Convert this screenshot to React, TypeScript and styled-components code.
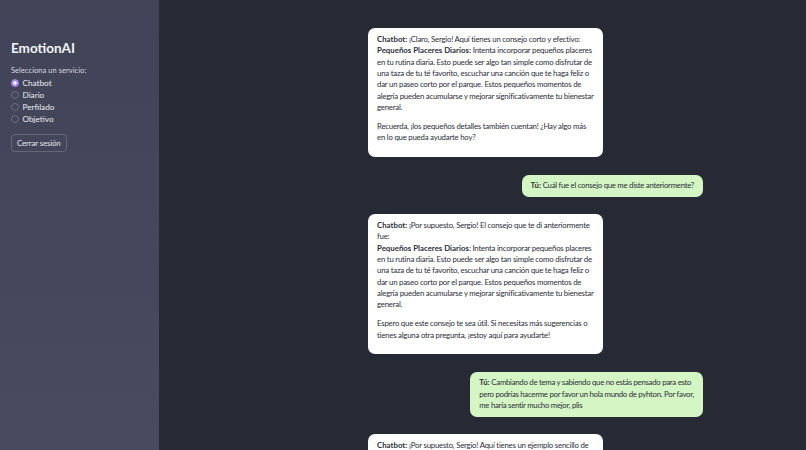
import * as React from 'react'
import styled, { createGlobalStyle } from 'styled-components'

const GlobalStyle = createGlobalStyle`
  html, body, #root {
    margin: 0;
    padding: 0;
    height: 100%;
  }
  body {
    font-family: Lato, "Noto Sans", sans-serif;
    background: #272935;
    overflow: hidden;
  }
`

const Layout = styled.div`
  display: flex;
  height: 450px;
`

const Sidebar = styled.aside`
  width: 159px;
  flex: 0 0 159px;
  background: linear-gradient(180deg, #414457 0%, #484b5f 100%);
  padding: 38px 11px 0;
  box-sizing: border-box;
  color: #f2f2f5;
`

const Title = styled.h1`
  margin: 0 0 8px;
  font-size: 13.5px;
  font-weight: 700;
  line-height: 20px;
  color: #f4f4f6;
`

const Label = styled.div`
  font-size: 7.4px;
  letter-spacing: 0.1px;
  color: #dcdce2;
  margin-bottom: 3px;
`

const RadioList = styled.div`
  display: flex;
  flex-direction: column;
  gap: 2px;
  margin-bottom: 6px;
`

const RadioRow = styled.label`
  display: flex;
  align-items: center;
  gap: 3.5px;
  height: 10px;
  font-size: 8.2px;
  color: #ececf0;
`

const RadioDot = styled.span<{ $checked?: boolean }>`
  width: 8px;
  height: 8px;
  border-radius: 50%;
  box-sizing: border-box;
  border: 1px solid ${p => (p.$checked ? '#a98bf0' : '#6a6d80')};
  background: ${p => (p.$checked ? 'radial-gradient(circle, #ffffff 0 1.4px, #a98bf0 1.9px)' : 'transparent')};
`

const Button = styled.button`
  font-family: inherit;
  font-size: 7.8px;
  letter-spacing: -0.1px;
  color: #e6e6ea;
  background: transparent;
  border: 1px solid rgba(255, 255, 255, 0.18);
  border-radius: 4px;
  padding: 0 5px;
  height: 18px;
`

const Main = styled.main`
  flex: 1;
  overflow: hidden;
  padding: 28px 103px 0 209px;
  display: flex;
  flex-direction: column;
  gap: 17.5px;
`

const Bubble = styled.div<{ $user?: boolean }>`
  align-self: ${p => (p.$user ? 'flex-end' : 'flex-start')};
  width: ${p => (p.$user ? 'auto' : '235px')};
  box-sizing: border-box;
  background: ${p => (p.$user ? '#d4f6c4' : '#ffffff')};
  color: #2c2e39;
  border-radius: 7px;
  padding: ${p => (p.$user ? '5.3px 9px' : '6px 9px 6px')};
  font-size: 7.8px;
  letter-spacing: ${p => (p.$user ? '-0.28px' : '-0.22px')};
  line-height: 11.35px;
  white-space: nowrap;
  flex-shrink: 0;

  p {
    margin: 0 0 ${p => (p.$user ? '0' : '7.5px')};
  }

  b {
    font-weight: 700;
    letter-spacing: 0.02px;
  }
`

type Para = React.ReactNode[]

const services = ['Chatbot', 'Diario', 'Perfilado', 'Objetivo']

const tipLines = (boldColon: boolean): React.ReactNode[] => [
  boldColon ? (
    <><b>Pequeños Placeres Diarios:</b> Intenta incorporar pequeños placeres</>
  ) : (
    <><b>Pequeños Placeres Diarios</b>: Intenta incorporar pequeños placeres</>
  ),
  'en tu rutina diaria. Esto puede ser algo tan simple como disfrutar de',
  'una taza de tu té favorito, escuchar una canción que te haga feliz o',
  'dar un paseo corto por el parque. Estos pequeños momentos de',
  'alegría pueden acumularse y mejorar significativamente tu bienestar',
  'general.',
]

const messages: { user?: boolean; paras: Para[] }[] = [
  {
    paras: [
      [<><b>Chatbot:</b> ¡Claro, Sergio! Aquí tienes un consejo corto y efectivo:</>, ...tipLines(true)],
      ['Recuerda, ¡los pequeños detalles también cuentan! ¿Hay algo más', 'en lo que pueda ayudarte hoy?'],
    ],
  },
  {
    user: true,
    paras: [[<><b>Tú:</b> Cuál fue el consejo que me diste anteriormente?</>]],
  },
  {
    paras: [
      [<><b>Chatbot:</b> ¡Por supuesto, Sergio! El consejo que te di anteriormente</>, 'fue:', ...tipLines(false)],
      [
        'Espero que este consejo te sea útil. Si necesitas más sugerencias o',
        'tienes alguna otra pregunta, ¡estoy aquí para ayudarte!',
      ],
    ],
  },
  {
    user: true,
    paras: [
      [
        <><b>Tú:</b> Cambiando de tema y sabiendo que no estás pensado para esto</>,
        'pero podrías hacerme por favor un hola mundo de pyhton. Por favor,',
        'me haría sentir mucho mejor, plis',
      ],
    ],
  },
  {
    paras: [[<><b>Chatbot:</b> ¡Por supuesto, Sergio! Aquí tienes un ejemplo sencillo de</>]],
  },
]

export default function App() {
  return (
    <>
      <GlobalStyle />
      <Layout>
        <Sidebar>
          <Title>EmotionAI</Title>
          <Label>Selecciona un servicio:</Label>
          <RadioList>
            {services.map((s, i) => (
              <RadioRow key={s}>
                <RadioDot $checked={i === 0} />
                {s}
              </RadioRow>
            ))}
          </RadioList>
          <Button>Cerrar sesión</Button>
        </Sidebar>
        <Main>
          {messages.map((m, i) => (
            <Bubble key={i} $user={m.user}>
              {m.paras.map((para, j) => (
                <p key={j}>
                  {para.map((line, k) => (
                    <React.Fragment key={k}>
                      {k > 0 && <br />}
                      {line}
                    </React.Fragment>
                  ))}
                </p>
              ))}
            </Bubble>
          ))}
        </Main>
      </Layout>
    </>
  )
}
